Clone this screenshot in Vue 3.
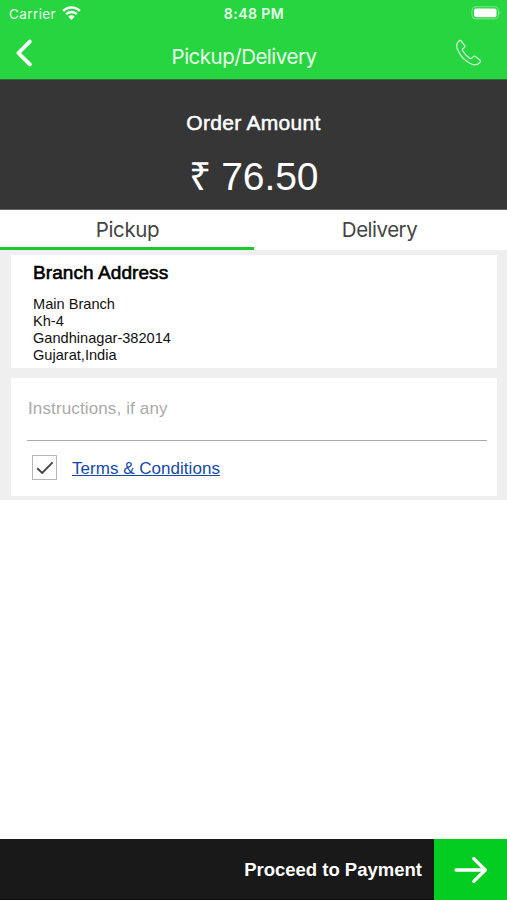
<script setup>
import { ref } from 'vue'

const tabs = ['Pickup', 'Delivery']
const activeTab = ref('Pickup')
const address = ['Main Branch', 'Kh-4', 'Gandhinagar-382014', 'Gujarat,India']
</script>

<template>
  <div class="screen">
    <header class="top">
      <div class="status">
        <div class="carrier">
          <span class="carrier-name">Carrier</span>
          <svg class="wifi" width="19" height="14" viewBox="0 0 19 14">
            <path d="M1.1 4.9A11.8 11.8 0 0 1 17.9 4.9" />
            <path d="M4.2 8.1A7.6 7.6 0 0 1 14.8 8.1" />
            <path class="solid" d="M9.5 13.9L6.3 10.7A4.5 4.5 0 0 1 12.7 10.7Z" />
          </svg>
        </div>
        <span class="time">8:48 PM</span>
        <svg class="battery" width="31" height="14" viewBox="0 0 31 14">
          <rect class="shell" x="1" y="0.7" width="26.5" height="12.2" rx="3.6" />
          <rect class="charge" x="3" y="2.4" width="22.5" height="8.8" rx="1.8" />
          <path class="tip" d="M28.7 4.8Q30.6 6.8 28.7 8.8Z" />
        </svg>
      </div>
      <div class="nav">
        <svg class="back" width="18" height="28" viewBox="0 0 18 28">
          <path d="M14.8 2.6L3.4 14L14.8 25.4" />
        </svg>
        <h1 class="title">Pickup/Delivery</h1>
        <svg class="phone" width="28" height="28" viewBox="0 0 28 28">
          <path d="M5.9 1.6Q4.8 1 3.7 2.2C1.5 4.2 1.2 7 2.4 10.1C4.6 16 9.6 21.8 15.2 24.5C19 26.3 22.4 26.1 24.6 23.7Q26 22.4 24.9 21.1L20.4 17.5Q19.2 16.7 18.2 17.7L16.8 19.1Q15.7 20.1 14.3 19.1C11.5 17.1 9.3 14.6 7.7 11.8Q7 10.5 8.1 9.6L9.4 8.5Q10.3 7.6 9.6 6.5Z" />
        </svg>
      </div>
    </header>

    <section class="amount">
      <div class="amount-label">Order Amount</div>
      <div class="amount-value">₹ 76.50</div>
    </section>

    <nav class="tabs">
      <button
        v-for="tab in tabs"
        :key="tab"
        class="tab"
        :class="{ active: tab === activeTab }"
        @click="activeTab = tab"
      >
        <span>{{ tab }}</span>
      </button>
    </nav>

    <main class="panel">
      <section class="card branch">
        <h2 class="branch-title">Branch Address</h2>
        <div v-for="line in address" :key="line" class="line"><span>{{ line }}</span></div>
      </section>
      <section class="card extras">
        <div class="instructions"><span>Instructions, if any</span></div>
        <div class="terms">
          <span class="checkbox">
            <svg width="18" height="14" viewBox="0 0 18 14"><path d="M1.2 7.2L6.2 12L16.6 1.4" /></svg>
          </span>
          <a class="terms-link">Terms &amp; Conditions</a>
        </div>
      </section>
    </main>

    <footer class="footer">
      <div class="proceed"><span>Proceed to Payment</span></div>
      <div class="go">
        <svg width="34" height="30" viewBox="0 0 34 30">
          <path d="M2 15H31M19.8 3.6L31.3 15L19.8 26.4" />
        </svg>
      </div>
    </footer>
  </div>
</template>

<style>
body {
  background: #fff;
}
</style>

<style scoped>
.screen {
  display: flex;
  flex-direction: column;
  width: 507px;
  height: 900px;
  overflow: hidden;
  background: #fff;
  font-family: "Liberation Sans", Arial, sans-serif;
  white-space: nowrap;
}
svg {
  display: block;
  fill: none;
  stroke-linecap: round;
  stroke-linejoin: round;
}
.top {
  box-sizing: border-box;
  height: 80px;
  background: #27d541;
  border-bottom: 1px solid #2c6c35;
  color: #e9ffeb;
  font-family: Inter, sans-serif;
}
.status {
  display: grid;
  grid-template-columns: 1fr auto 1fr;
  align-items: center;
  height: 27px;
  padding: 0 5px 0 9px;
}
.carrier {
  display: flex;
  align-items: center;
  gap: 6px;
}
.carrier-name {
  padding-top: 1px;
  font-size: 13.5px;
  letter-spacing: 0.4px;
}
.wifi {
  margin-top: -1px;
}
.wifi path {
  stroke: #fff;
  stroke-width: 2.5;
  stroke-linecap: butt;
}
.wifi .solid {
  fill: #fff;
  stroke: none;
}
.time {
  margin-right: 3px;
  font-size: 14px;
  font-weight: 600;
  letter-spacing: 0.45px;
}
.battery {
  justify-self: end;
  margin-top: -1px;
}
.shell {
  stroke: #7be78a;
}
.charge {
  fill: #fff;
}
.tip {
  fill: #7be78a;
}
.nav {
  display: grid;
  grid-template-columns: 60px 1fr 60px;
  align-items: center;
  height: 52px;
}
.back {
  margin: -1px 0 0 15px;
}
.back path {
  stroke: #fff;
  stroke-width: 3.8;
}
.title {
  margin: 8px 0 0;
  padding-right: 19px;
  text-align: center;
  font-size: 20.5px;
  font-weight: 400;
  line-height: 28px;
  letter-spacing: -0.5px;
}
.phone {
  margin: -1px 0 0 8px;
}
.phone path {
  stroke: #c9f8cf;
  stroke-width: 1.3;
}
.amount {
  box-sizing: border-box;
  height: 130px;
  padding-top: 29px;
  background: #363636;
  border-bottom: 1px solid #666;
  color: #fff;
  text-align: center;
}
.amount-label {
  font-size: 21px;
  line-height: 28px;
  letter-spacing: 0.3px;
  -webkit-text-stroke: 0.5px;
}
.amount-value {
  margin-top: 18px;
  font-size: 39px;
  line-height: 44px;
  letter-spacing: -0.1px;
}
.tabs {
  display: grid;
  grid-template-columns: 254px 253px;
  height: 40px;
  background: #fff;
}
.tab {
  box-sizing: border-box;
  padding: 2px 2px 0 0;
  border: 0;
  border-bottom: 3px solid #fff;
  background: none;
  color: #444;
  font-family: Inter, sans-serif;
  font-size: 20.5px;
  letter-spacing: -0.5px;
}
.tab.active {
  padding: 2px 0 0 1px;
  border-color: #18c932;
  letter-spacing: -0.4px;
}
.panel {
  display: flex;
  flex-direction: column;
  gap: 10px;
  box-sizing: border-box;
  height: 250px;
  padding: 5px 10px 4px 11px;
  background: #efefef;
}
.card {
  box-sizing: border-box;
  background: #fff;
}
.branch {
  height: 113px;
  padding: 6px 22px 0;
  color: #111;
}
.branch-title {
  margin: 0 0 12px;
  font-size: 19px;
  font-weight: 400;
  line-height: 23px;
  letter-spacing: 0.08px;
  color: #000;
  -webkit-text-stroke: 0.6px;
}
.line {
  font-size: 14.6px;
  line-height: 17px;
}
.extras {
  height: 118px;
  padding: 0 10px 0 16px;
}
.instructions {
  box-sizing: border-box;
  height: 63px;
  padding: 20px 1px 0;
  border-bottom: 1px solid #aaa;
  color: #aaa;
  font-size: 17px;
  line-height: 21px;
  letter-spacing: 0.13px;
}
.terms {
  display: flex;
  align-items: center;
  gap: 15px;
  height: 53px;
  padding-left: 5px;
}
.checkbox {
  display: grid;
  place-items: center;
  width: 23px;
  height: 23px;
  border: 1px solid #b5b5b5;
}
.checkbox path {
  stroke: #444;
  stroke-width: 1.9;
  stroke-linecap: butt;
  stroke-linejoin: miter;
}
.terms-link {
  padding-top: 2px;
  color: #1549a8;
  font-size: 17px;
  letter-spacing: 0.03px;
  text-decoration: underline;
}
.footer {
  display: flex;
  height: 61px;
  margin-top: auto;
}
.proceed {
  box-sizing: border-box;
  display: flex;
  flex: 1;
  align-items: center;
  justify-content: flex-end;
  padding: 2px 12px 0 0;
  border-bottom: 1px solid #0e0709;
  background: #191919;
  color: #fff;
  font-size: 18.5px;
  font-weight: 700;
}
.go {
  display: grid;
  place-items: center;
  width: 73px;
  background: #02cd20;
}
.go path {
  stroke: #fff;
  stroke-width: 3.4;
}
</style>
